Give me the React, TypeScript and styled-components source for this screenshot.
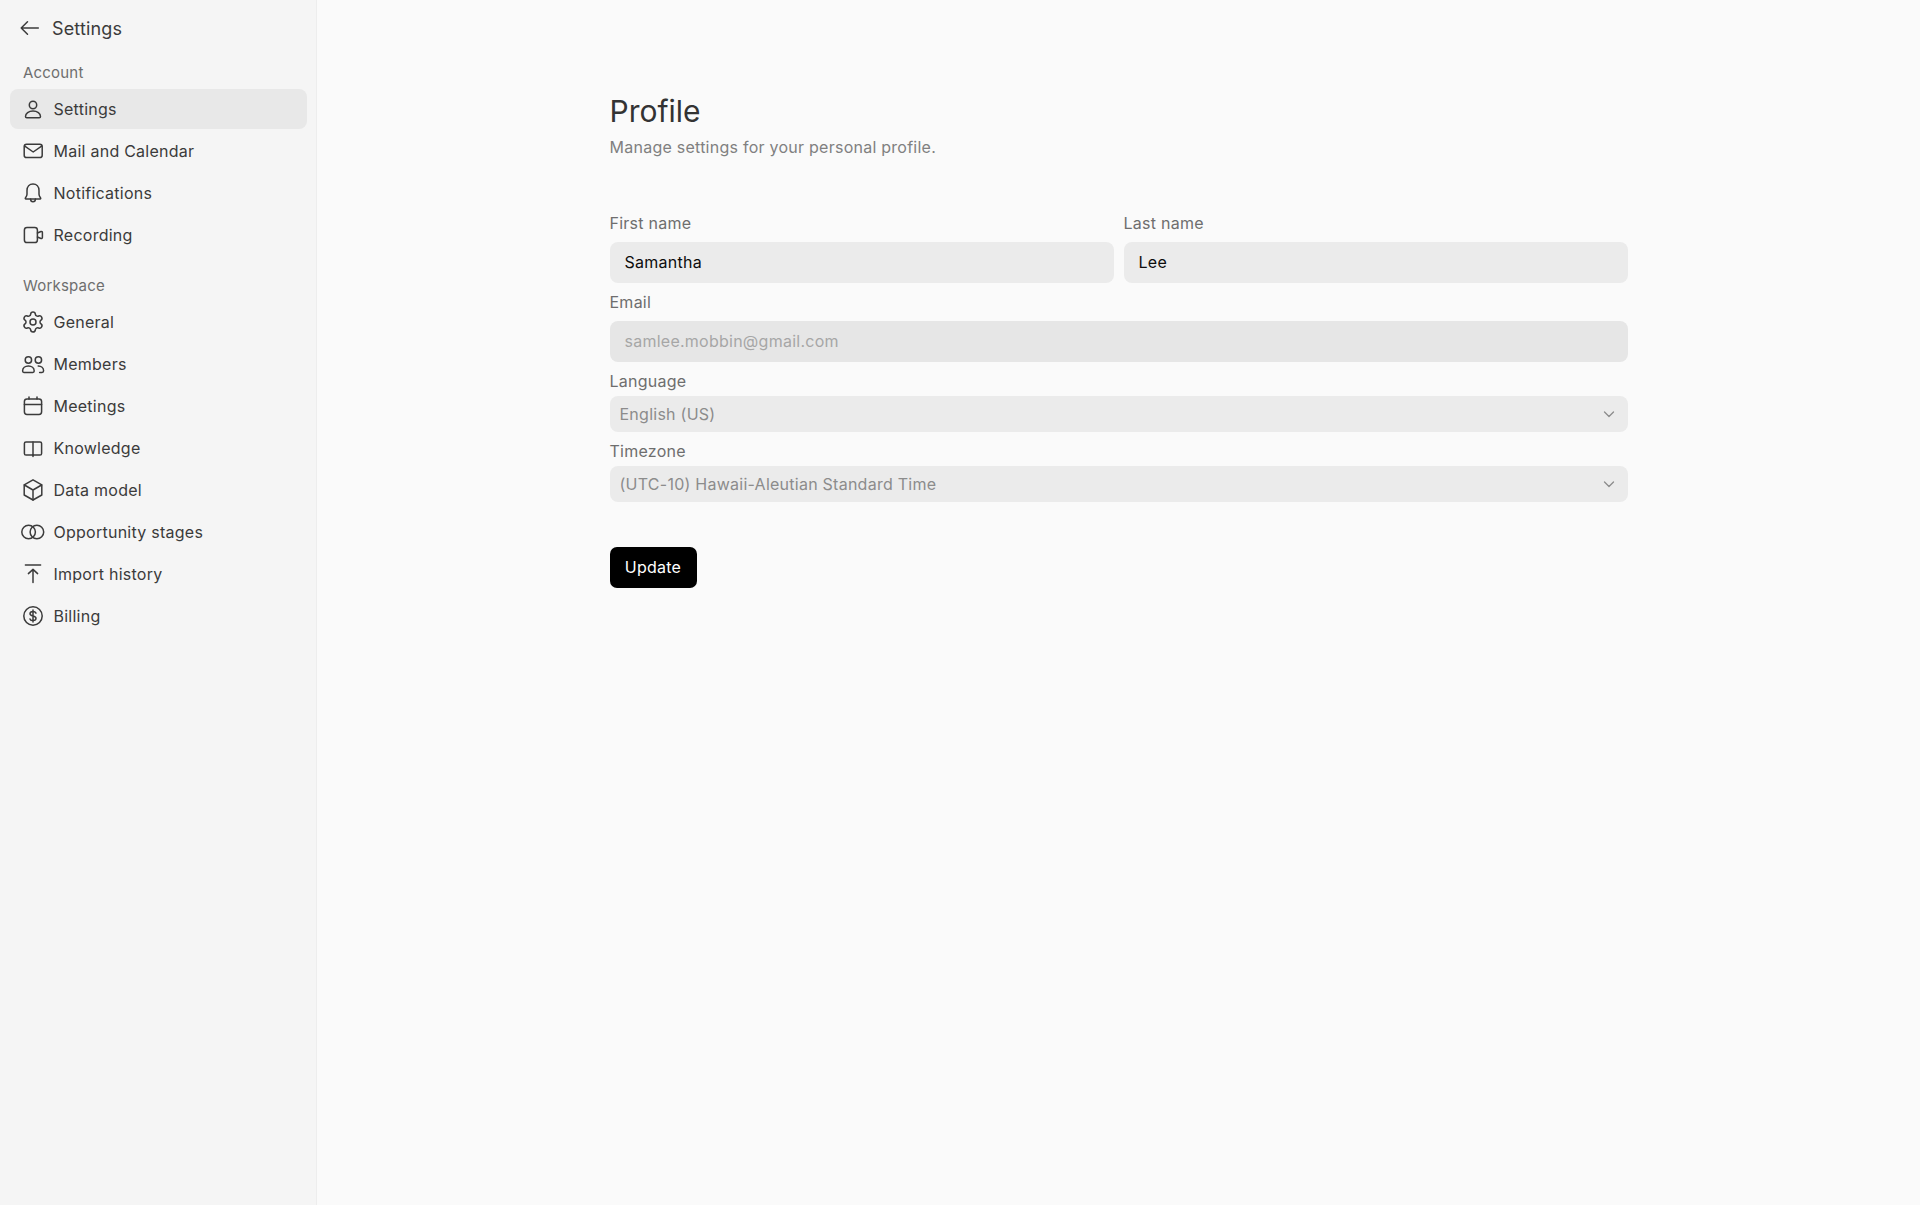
import React from "react";
import styled, { createGlobalStyle } from "styled-components";
import { Settings as GearIcon } from "lucide-react";

const GlobalStyle = createGlobalStyle`
  html, body {
    margin: 0;
    padding: 0;
    background-color: #fafafa;
  }
  * {
    box-sizing: border-box;
  }
  body {
    font-family: Inter, "Liberation Sans", sans-serif;
    font-size: 16px;
    letter-spacing: 0.25px;
    color: #3b3b3b;
  }
`;

const Page = styled.div`
  display: flex;
  min-height: 1205px;
`;

const Sidebar = styled.nav`
  display: flex;
  flex-direction: column;
  flex: 0 0 317px;
  padding: 0 9px 0 10px;
  background-color: #f5f5f5;
  border-right: 1px solid #ededed;
`;

const SidebarHeader = styled.a`
  display: flex;
  align-items: center;
  gap: 10px;
  height: 56px;
  margin-bottom: 4px;
  padding-left: 8px;
  font-size: 18px;
  letter-spacing: 0.15px;
  color: #3b3b3b;
`;

const SectionLabel = styled.div<{ $spaced?: boolean }>`
  height: 24px;
  margin-top: ${(p) => (p.$spaced ? "19px" : "1px")};
  margin-bottom: 4px;
  padding-left: 13px;
  font-size: 15px;
  line-height: 24px;
  letter-spacing: 0.2px;
  color: #6e6e6e;
`;

const NavList = styled.div`
  display: flex;
  flex-direction: column;
  gap: 2px;
`;

const NavItem = styled.a<{ $active?: boolean }>`
  display: flex;
  align-items: center;
  gap: 8.5px;
  height: 40px;
  padding-left: 11px;
  border-radius: 8px;
  background-color: ${(p) => (p.$active ? "#e8e8e8" : "transparent")};
  color: #3b3b3b;
  font-size: 16px;
`;

const Icon = styled.svg.attrs({
  viewBox: "0 0 24 24",
  fill: "none",
  stroke: "currentColor",
  strokeWidth: 1.5,
  strokeLinecap: "round",
  strokeLinejoin: "round",
})`
  flex: 0 0 24px;
  width: 24px;
  height: 24px;
  color: #3b3b3b;
`;

const Main = styled.main`
  flex: 1;
  padding-top: 91px;
`;

const Content = styled.div`
  width: 1018px;
  margin: 0 auto;
`;

const Title = styled.h1`
  margin: 0 0 4px;
  font-size: 30px;
  font-weight: 400;
  line-height: 40px;
  letter-spacing: 0;
  color: #333333;
`;

const Subtitle = styled.p`
  margin: 0 0 52px;
  font-size: 16px;
  line-height: 24px;
  color: #808080;
`;

const Form = styled.form`
  display: flex;
  flex-direction: column;
`;

const NameRow = styled.div`
  display: grid;
  grid-template-columns: 1fr 1fr;
  gap: 10px;
`;

const Field = styled.div<{ $tight?: boolean }>`
  display: flex;
  flex-direction: column;
  gap: ${(p) => (p.$tight ? "3px" : "7px")};
  margin-bottom: 7px;
`;

const Label = styled.label`
  font-size: 16px;
  line-height: 24px;
  color: #6e6e6e;
`;

const TextInput = styled.input`
  width: 100%;
  height: 41px;
  padding: 0 15px 1px;
  border: none;
  border-radius: 8px;
  outline: none;
  background-color: #ebebeb;
  font-family: inherit;
  font-size: 16px;
  letter-spacing: inherit;
  color: #0d0d0d;

  &:disabled {
    background-color: #e6e6e6;
    color: #a6a6a6;
  }
`;

const SelectButton = styled.button`
  display: flex;
  align-items: center;
  justify-content: space-between;
  width: 100%;
  height: 36px;
  padding: 0 13px 0 10px;
  border: none;
  border-radius: 8px;
  background-color: #ebebeb;
  font-family: inherit;
  font-size: 16px;
  letter-spacing: inherit;
  color: #8c8c8c;
`;

const Chevron = styled.svg`
  width: 12px;
  height: 12px;
  color: #8c8c8c;
`;

const SubmitButton = styled.button`
  align-self: flex-start;
  width: 87px;
  height: 41px;
  margin-top: 38px;
  padding: 0 0 1px;
  border: none;
  border-radius: 7px;
  background-color: #000000;
  font-family: inherit;
  font-size: 16px;
  letter-spacing: inherit;
  color: #ffffff;
`;

const BackIcon = () => (
  <Icon>
    <path d="M3.2 12H20.3M9.5 5.7 3.2 12l6.3 6.3" />
  </Icon>
);

const icons: Record<string, React.ReactNode> = {
  person: (
    <Icon>
      <circle cx="12" cy="8" r="3.7" />
      <path d="M4.5 19.4c0-3 3.2-5.4 7.5-5.4s7.5 2.4 7.5 5.4c0 .8-.5 1.3-1.3 1.3H5.8c-.8 0-1.3-.5-1.3-1.3z" />
    </Icon>
  ),
  mail: (
    <Icon>
      <rect x="3.2" y="5.2" width="18" height="13.4" rx="2.4" />
      <path d="M3.8 7.2 12.2 13l8.4-5.8" />
    </Icon>
  ),
  bell: (
    <Icon>
      <path d="M12 3c-3.5 0-6 2.7-6 6.5v3.7c0 1.6-.9 2.9-1.6 3.8-.3.4 0 .9.4.9h14.4c.4 0 .7-.5.4-.9-.7-.9-1.6-2.2-1.6-3.8V9.5C18 5.7 15.5 3 12 3z" />
      <path d="M9.6 18c0 1.7 1 2.8 2.4 2.8s2.4-1.1 2.4-2.8" />
    </Icon>
  ),
  video: (
    <Icon>
      <rect x="3.4" y="4.4" width="13" height="15.2" rx="2.6" />
      <path d="m16.4 10 3.6-1.5c.7-.3 1.4.2 1.4.9v5.2c0 .7-.7 1.2-1.4.9L16.4 14" />
    </Icon>
  ),
  users: (
    <Icon>
      <circle cx="7.4" cy="8" r="3.2" />
      <circle cx="17.4" cy="8" r="3.2" />
      <path d="M1.6 19c0-2.9 2.6-5 5.8-5s5.8 2.1 5.8 5c0 .8-.5 1.4-1.3 1.4H2.9c-.8 0-1.3-.6-1.3-1.4z" />
      <path d="M17.2 14c3 0 5.4 2 5.4 4.8 0 1-.6 1.6-1.6 1.6h-2.4" />
    </Icon>
  ),
  calendar: (
    <Icon>
      <rect x="3.4" y="5" width="17.2" height="15.4" rx="2.6" />
      <path d="M3.4 10.4h17.2M8 3v2M16 3v2" />
    </Icon>
  ),
  book: (
    <Icon>
      <path d="M12 7v13.6" />
      <path d="M12 6H5c-.9 0-1.6.7-1.6 1.6v9.8c0 .9.7 1.6 1.6 1.6h7" />
      <path d="M12 6h7c.9 0 1.6.7 1.6 1.6v9.8c0 .9-.7 1.6-1.6 1.6h-7" />
    </Icon>
  ),
  cube: (
    <Icon>
      <path d="M12 1.8 20.8 6.8V17L12 22 3.2 17V6.8z" />
      <path d="M3.4 7 12 12l8.6-5M12 12v10" />
    </Icon>
  ),
  rings: (
    <Icon>
      <circle cx="7.6" cy="12" r="6.8" />
      <circle cx="15.9" cy="12" r="6.8" />
    </Icon>
  ),
  upload: (
    <Icon>
      <path d="M4.4 3h15.2M7.4 11.6 12 7.4l4.6 4.2M12 7.4V20.4" />
    </Icon>
  ),
  dollar: (
    <Icon>
      <circle cx="12" cy="12" r="9.2" />
      <path d="M15 9.2c-.5-1-1.6-1.7-3-1.7-1.8 0-3 .9-3 2.3 0 3 6 1.5 6 4.5 0 1.4-1.3 2.3-3 2.3-1.5 0-2.6-.6-3-1.7M12 6v12" />
    </Icon>
  ),
};

const accountItems = [
  { label: "Settings", icon: "person", active: true },
  { label: "Mail and Calendar", icon: "mail" },
  { label: "Notifications", icon: "bell" },
  { label: "Recording", icon: "video" },
];

const workspaceItems = [
  { label: "General", icon: "gear" },
  { label: "Members", icon: "users" },
  { label: "Meetings", icon: "calendar" },
  { label: "Knowledge", icon: "book" },
  { label: "Data model", icon: "cube" },
  { label: "Opportunity stages", icon: "rings" },
  { label: "Import history", icon: "upload" },
  { label: "Billing", icon: "dollar" },
];

const StyledGear = styled(GearIcon)`
  flex: 0 0 24px;
  width: 24px;
  height: 24px;
  color: #3b3b3b;
`;

function NavIcon({ name }: { name: string }) {
  if (name === "gear") return <StyledGear strokeWidth={1.5} />;
  return <>{icons[name]}</>;
}

function SelectField({ label, value }: { label: string; value: string }) {
  return (
    <Field $tight>
      <Label>{label}</Label>
      <SelectButton type="button">
        <span>{value}</span>
        <Chevron viewBox="0 0 12 12" fill="none" stroke="currentColor" strokeWidth="1.3" strokeLinecap="round" strokeLinejoin="round">
          <path d="M1.5 4 6 8.5 10.5 4" />
        </Chevron>
      </SelectButton>
    </Field>
  );
}

export default function App() {
  return (
    <Page>
      <GlobalStyle />
      <Sidebar>
        <SidebarHeader>
          <BackIcon />
          Settings
        </SidebarHeader>
        <SectionLabel>Account</SectionLabel>
        <NavList>
          {accountItems.map((item) => (
            <NavItem key={item.label} $active={item.active}>
              <NavIcon name={item.icon} />
              {item.label}
            </NavItem>
          ))}
        </NavList>
        <SectionLabel $spaced>Workspace</SectionLabel>
        <NavList>
          {workspaceItems.map((item) => (
            <NavItem key={item.label}>
              <NavIcon name={item.icon} />
              {item.label}
            </NavItem>
          ))}
        </NavList>
      </Sidebar>
      <Main>
        <Content>
          <Title>Profile</Title>
          <Subtitle>Manage settings for your personal profile.</Subtitle>
          <Form onSubmit={(e) => e.preventDefault()}>
            <NameRow>
              <Field>
                <Label>First name</Label>
                <TextInput defaultValue="Samantha" />
              </Field>
              <Field>
                <Label>Last name</Label>
                <TextInput defaultValue="Lee" />
              </Field>
            </NameRow>
            <Field>
              <Label>Email</Label>
              <TextInput disabled defaultValue="samlee.mobbin@gmail.com" />
            </Field>
            <SelectField label="Language" value="English (US)" />
            <SelectField label="Timezone" value="(UTC-10) Hawaii-Aleutian Standard Time" />
            <SubmitButton type="submit">Update</SubmitButton>
          </Form>
        </Content>
      </Main>
    </Page>
  );
}
